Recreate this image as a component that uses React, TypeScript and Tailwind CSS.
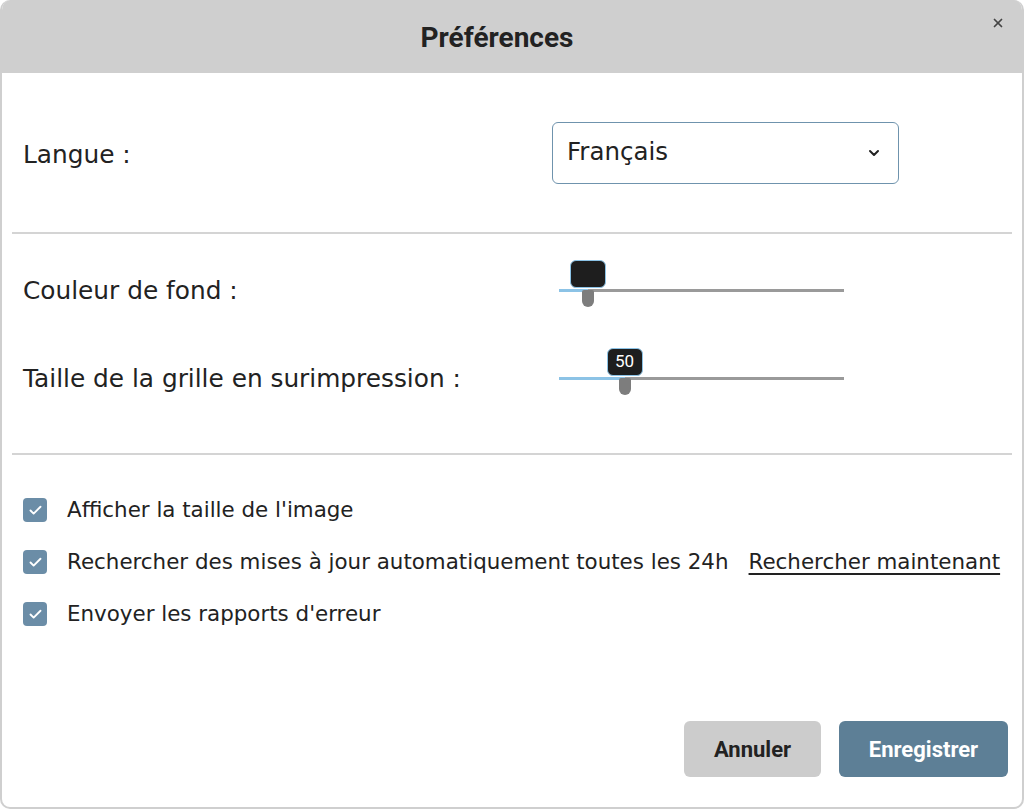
import { Check, ChevronDown, X } from 'lucide-react';

const body = { fontFamily: '"DejaVu Sans", "Open Sans", sans-serif' };
const roboto = { fontFamily: 'Roboto, "Liberation Sans", sans-serif' };

function Slider({ percent, label }: { percent: number; label?: string }) {
  return (
    <div className="relative w-[285px] h-[40px]">
      <div className="absolute left-0 right-0 top-[19px] h-[3px] bg-[#9a9a9a]" />
      <div className="absolute left-0 top-[19px] h-[3px] bg-[#8cc3e6]" style={{ width: `${percent}%` }} />
      <div
        className="absolute top-[20px] w-[12px] h-[17px] -ml-[6px] bg-[#7d7d7d] rounded-b-[6px] rounded-t-[2px]"
        style={{ left: `${percent}%` }}
      />
      <div
        className="absolute top-[-10px] w-[36px] h-[28px] -ml-[18px] bg-[#1e1e1e] border border-[#8cc3e6] rounded-[6px] flex items-center justify-center text-white text-[17px]"
        style={{ left: `${percent}%`, ...roboto }}
      >
        {label}
      </div>
    </div>
  );
}

function CheckRow({ text, children }: { text: string; children?: React.ReactNode }) {
  return (
    <div className="flex items-center h-[52px]">
      <span className="w-[24px] h-[24px] rounded-[4px] bg-[#6b8da7] flex items-center justify-center">
        <Check className="w-[15px] h-[15px] text-white" strokeWidth={3} />
      </span>
      <span className="ml-[20px] text-[21.4px] text-[#222]">{text}</span>
      {children}
    </div>
  );
}

export default function App() {
  return (
    <div className="w-[1024px] h-[809px] bg-white" style={body}>
      <div className="w-full h-full flex flex-col border-2 border-t-0 border-[#cfcfcf] rounded-[10px] overflow-hidden">
        <div className="relative h-[73px] bg-[#cfcfcf] flex items-center justify-center shrink-0 pr-[30px]">
          <h1 className="text-[28px] font-bold text-[#222] pt-[2px]" style={roboto}>Préférences</h1>
          <button className="absolute right-[17px] top-[16px] text-[#444]">
            <X className="w-[14px] h-[14px]" strokeWidth={3} />
          </button>
        </div>

        <div className="flex flex-col px-[10px] flex-1">
          <div className="flex items-center h-[159px] pl-[11px] pt-[4px]">
            <span className="text-[24.8px] text-[#222] w-[529px]">Langue :</span>
            <div className="w-[347px] h-[62px] border border-[#6f93ad] rounded-[6px] flex items-center justify-between pl-[14px] pr-[16px] -mt-[4px]">
              <span className="text-[24.5px] text-[#222]">Français</span>
              <ChevronDown className="w-[16px] h-[16px] text-[#222]" strokeWidth={3} />
            </div>
          </div>

          <div className="h-[2px] bg-[#d4d4d4]" />

          <div className="flex flex-col pl-[11px] pt-[35px] h-[219px]">
            <div className="flex items-center h-[42px]">
              <span className="text-[24.8px] text-[#222] w-[536px] pt-[2px]">Couleur de fond :</span>
              <Slider percent={10} />
            </div>
            <div className="flex items-center h-[42px] mt-[46px]">
              <span className="text-[24.8px] text-[#222] w-[536px] pt-[2px]">Taille de la grille en surimpression :</span>
              <Slider percent={23} label="50" />
            </div>
          </div>

          <div className="h-[2px] bg-[#d4d4d4]" />

          <div className="flex flex-col pl-[11px] pt-[29px]">
            <CheckRow text="Afficher la taille de l'image" />
            <CheckRow text="Rechercher des mises à jour automatiquement toutes les 24h">
              <a className="ml-[20px] text-[21.4px] text-[#222] underline underline-offset-[4px]">Rechercher maintenant</a>
            </CheckRow>
            <CheckRow text="Envoyer les rapports d'erreur" />
          </div>

          <div className="flex-1" />

          <div className="flex justify-end gap-[18px] pr-[4px] pb-[30px]" style={roboto}>
            <button className="w-[137px] h-[56px] rounded-[6px] bg-[#cccccc] text-[22px] font-bold text-[#222]">Annuler</button>
            <button className="w-[169px] h-[56px] rounded-[6px] bg-[#5d7f96] text-[22px] font-bold text-white">Enregistrer</button>
          </div>
        </div>
      </div>
    </div>
  );
}
